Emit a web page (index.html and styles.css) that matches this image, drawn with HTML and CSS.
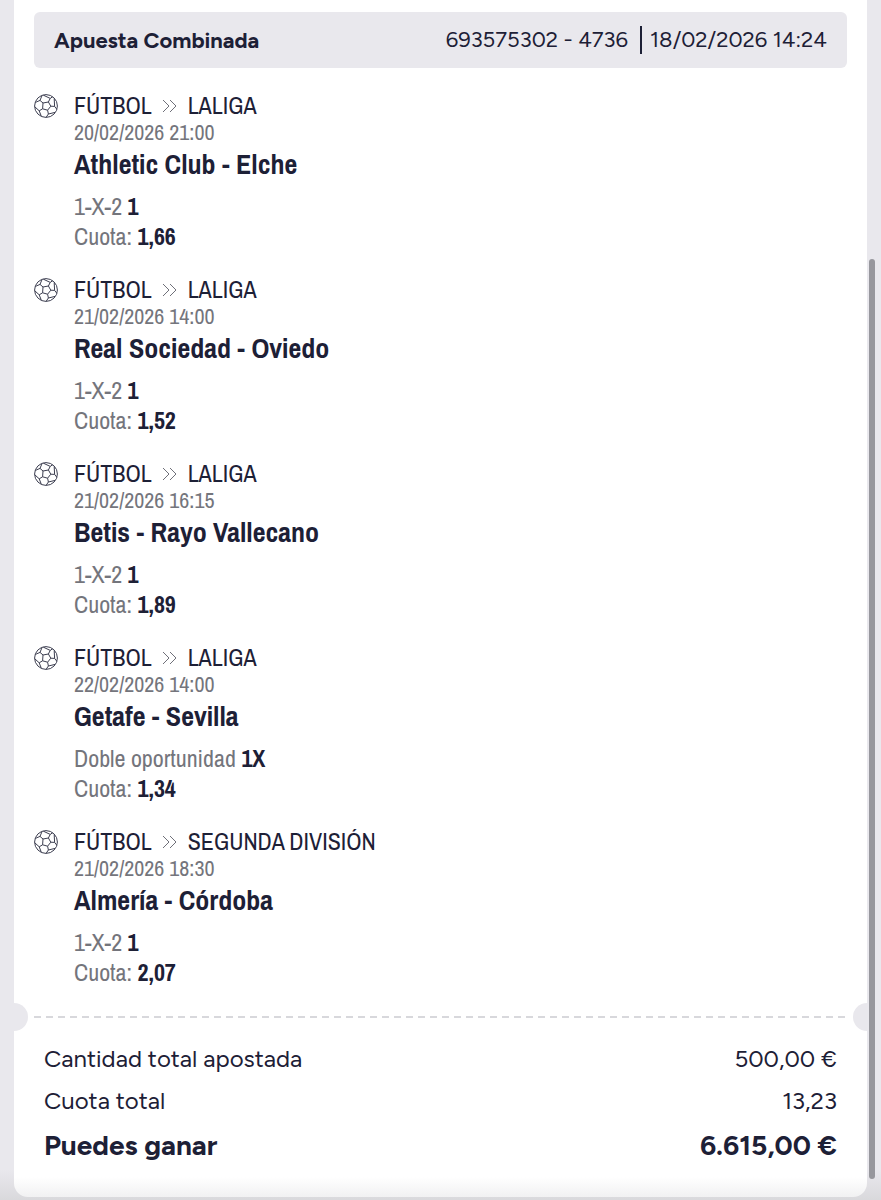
FILE: index.html
```
<!DOCTYPE html>
<html lang="es">
<head>
    <meta charset="UTF-8">
    <meta name="viewport" content="width=device-width, initial-scale=1.0">
    <title>Apuesta Combinada</title>
    <link rel="stylesheet" href="styles.css">
</head>
<body>
    <!-- shared icons -->
    <svg class="sprite" aria-hidden="true">
        <symbol id="ball" viewBox="0 0 24 24">
            <circle cx="12" cy="12" r="11.4"/>
            <path d="M9 9L14.4 8L16.8 12.2L13.6 16.2L8.6 14.8Z"/>
            <path d="M9 9L6 6.4M14.4 8L16.2 4.4M16.8 12.2L20.6 12.4M13.6 16.2L14.4 20M8.6 14.8L5.2 16.8"/>
            <path d="M1.4 8.4L6 6.4L8 1.6M9.4 1.2L16.2 4.4L18.6 2.8"/>
            <path d="M20.2 4.6L20.6 12.4L22.8 15.2M21 18.4L14.4 20L12.2 23.2"/>
            <path d="M7.4 22.4L5.2 16.8L.8 12.8"/>
        </symbol>
        <symbol id="arrows" viewBox="0 0 16 14">
            <path d="M1 1L7 7L1 13M8 1L14 7L8 13"/>
        </symbol>
    </svg>

    <main class="ticket">
        <header class="ticket-header">
            <h1>Apuesta Combinada</h1>
            <div class="ticket-info">
                <span class="ticket-id">693575302 - 4736</span>
                <time class="ticket-date">18/02/2026 14:24</time>
            </div>
        </header>

        <ul class="events">
            <li class="event">
                <svg class="ball"><use href="#ball"/></svg>
                <div class="event-body">
                    <div class="league">FÚTBOL <svg class="arrows"><use href="#arrows"/></svg> LALIGA</div>
                    <time class="date">20/02/2026 21:00</time>
                    <h2>Athletic Club - Elche</h2>
                    <p>1-X-2 <b>1</b></p>
                    <p>Cuota: <b>1,66</b></p>
                </div>
            </li>
            <li class="event">
                <svg class="ball"><use href="#ball"/></svg>
                <div class="event-body">
                    <div class="league">FÚTBOL <svg class="arrows"><use href="#arrows"/></svg> LALIGA</div>
                    <time class="date">21/02/2026 14:00</time>
                    <h2>Real Sociedad - Oviedo</h2>
                    <p>1-X-2 <b>1</b></p>
                    <p>Cuota: <b>1,52</b></p>
                </div>
            </li>
            <li class="event">
                <svg class="ball"><use href="#ball"/></svg>
                <div class="event-body">
                    <div class="league">FÚTBOL <svg class="arrows"><use href="#arrows"/></svg> LALIGA</div>
                    <time class="date">21/02/2026 16:15</time>
                    <h2>Betis - Rayo Vallecano</h2>
                    <p>1-X-2 <b>1</b></p>
                    <p>Cuota: <b>1,89</b></p>
                </div>
            </li>
            <li class="event">
                <svg class="ball"><use href="#ball"/></svg>
                <div class="event-body">
                    <div class="league">FÚTBOL <svg class="arrows"><use href="#arrows"/></svg> LALIGA</div>
                    <time class="date">22/02/2026 14:00</time>
                    <h2>Getafe - Sevilla</h2>
                    <p>Doble oportunidad <b>1X</b></p>
                    <p>Cuota: <b>1,34</b></p>
                </div>
            </li>
            <li class="event">
                <svg class="ball"><use href="#ball"/></svg>
                <div class="event-body">
                    <div class="league">FÚTBOL <svg class="arrows"><use href="#arrows"/></svg> SEGUNDA DIVISIÓN</div>
                    <time class="date">21/02/2026 18:30</time>
                    <h2>Almería - Córdoba</h2>
                    <p>1-X-2 <b>1</b></p>
                    <p>Cuota: <b>2,07</b></p>
                </div>
            </li>
        </ul>

        <div class="divider"></div>

        <dl class="summary">
            <div class="row">
                <dt>Cantidad total apostada</dt>
                <dd>500,00 €</dd>
            </div>
            <div class="row">
                <dt>Cuota total</dt>
                <dd>13,23</dd>
            </div>
            <div class="row win">
                <dt>Puedes ganar</dt>
                <dd>6.615,00 €</dd>
            </div>
        </dl>
    </main>
    <div class="scroll-thumb"></div>
</body>
</html>
```
FILE: styles.css
```
* {
    box-sizing: border-box;
}
body {
    position: relative;
    margin: 0;
    min-height: 100vh;
    padding: 0 14px 3px;
    background: linear-gradient(to top, #d9d9dc, #e9e8ed 30px);
    color: #1d2036;
    font-family: Figtree, Lato, sans-serif;
    font-size: 24px;
}
h1, h2, p, ul, dl, dd {
    margin: 0;
    padding: 0;
}
.sprite {
    position: absolute;
    width: 0;
    height: 0;
}
.ticket {
    padding: 12px 20px 28px;
    background: linear-gradient(to top, #f1f1f2, #fff 20px);
    border-radius: 0 0 14px 14px;
}
.ticket-header {
    display: flex;
    justify-content: space-between;
    align-items: center;
    min-height: 56px;
    padding: 0 20px;
    background: #e9e8ed;
    border-radius: 6px;
}
.ticket-header h1 {
    font-size: 22px;
    font-weight: 700;
}
.ticket-info {
    display: flex;
    font-size: 22px;
    line-height: 28px;
}
.ticket-id {
    padding-right: 12px;
}
.ticket-date {
    padding-left: 8px;
    border-left: 2px solid #1d2036;
}

/* events */
.events {
    display: flex;
    flex-direction: column;
    gap: 25px;
    padding-top: 24px;
    list-style: none;
    font-family: "Archivo Narrow", "Liberation Sans Narrow", "Liberation Sans", sans-serif;
}
.event {
    display: flex;
    gap: 16px;
}
.ball {
    width: 24px;
    height: 24px;
    margin-top: 2px;
    fill: none;
    stroke: #3c3e50;
    stroke-width: 1;
}
.arrows {
    width: 16px;
    height: 14px;
    fill: none;
    stroke: #6f7079;
    stroke-width: 1;
}
.league {
    display: flex;
    align-items: center;
    gap: 10px;
    font-size: 24px;
    line-height: 27px;
}
.date {
    display: block;
    color: #74757c;
    font-size: 22px;
    line-height: 27px;
}
.event h2 {
    margin-bottom: 8px;
    font-size: 28px;
    line-height: 37px;
}
.event p {
    color: #74757c;
    font-size: 24px;
    line-height: 30px;
}
.event b {
    color: #1d2036;
}

/* perforated line with the two notches */
.divider {
    position: relative;
    height: 28px;
    margin-top: 16px;
    background: repeating-linear-gradient(to right, #d8d8dc 0 7px, transparent 7px 12px) center / 100% 2px no-repeat;
}
.divider::before,
.divider::after {
    content: "";
    position: absolute;
    top: 0;
    width: 14px;
    height: 28px;
    background: #e9e8ed;
}
.divider::before {
    left: -20px;
    border-radius: 0 14px 14px 0;
}
.divider::after {
    right: -20px;
    border-radius: 14px 0 0 14px;
}

.summary {
    padding: 7px 10px 0;
}
.row {
    display: flex;
    justify-content: space-between;
    line-height: 42px;
}
.win {
    font-size: 28px;
    font-weight: 700;
    line-height: 47px;
}

.scroll-thumb {
    position: absolute;
    top: 259px;
    right: 6px;
    bottom: 21px;
    width: 6px;
    background: #97979d;
    border-radius: 3px;
}
```
